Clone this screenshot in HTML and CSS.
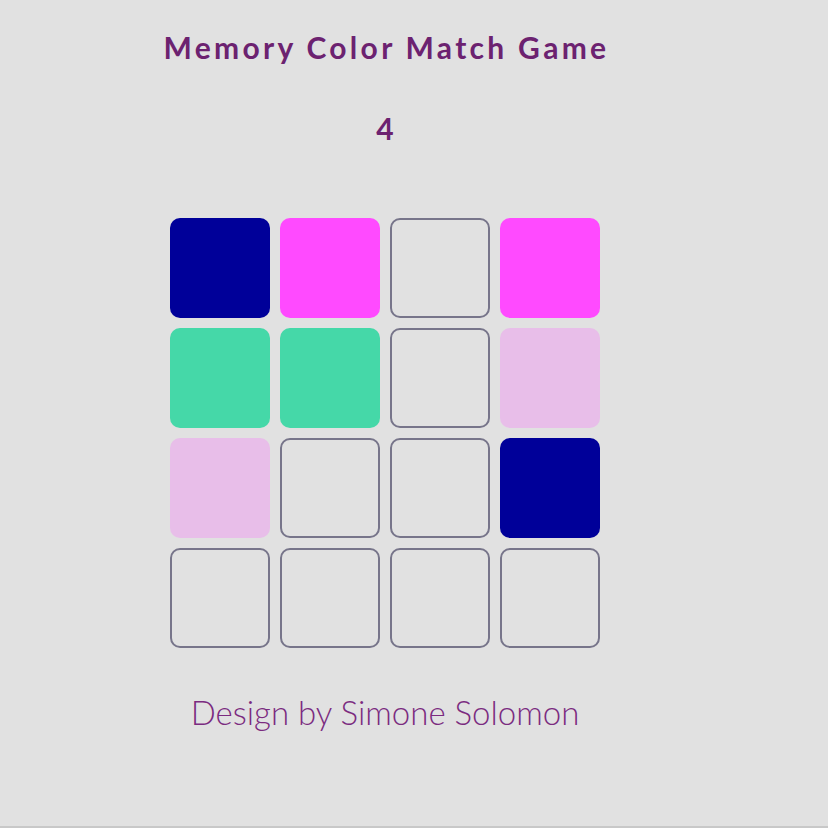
FILE: index.html
```html
<!DOCTYPE html>
<html>
<head>
<meta charset="utf-8">
<link rel="stylesheet" href="styles.css">
</head>
<body>
<main class="game">
  <h1 class="title">Memory Color Match Game</h1>
  <div class="score">4</div>
  <div class="board">
    <div class="tile blue"></div>
    <div class="tile magenta"></div>
    <div class="tile hidden"></div>
    <div class="tile magenta"></div>
    <div class="tile green"></div>
    <div class="tile green"></div>
    <div class="tile hidden"></div>
    <div class="tile pink"></div>
    <div class="tile pink"></div>
    <div class="tile hidden"></div>
    <div class="tile hidden"></div>
    <div class="tile blue"></div>
    <div class="tile hidden"></div>
    <div class="tile hidden"></div>
    <div class="tile hidden"></div>
    <div class="tile hidden"></div>
  </div>
  <p class="credit">Design by Simone Solomon</p>
</main>
</body>
</html>
```
FILE: styles.css
```css
html, body {
  margin: 0;
  padding: 0;
  background: #e1e1e1;
  height: 100%;
}
body {
  border-bottom: 2px solid #c8c8c8;
  box-sizing: border-box;
}
.game {
  width: 770px;
  display: flex;
  flex-direction: column;
  align-items: center;
  font-family: "Lato", "Open Sans", sans-serif;
}
.title {
  margin: 29px 0 0;
  padding-left: 3px;
  font-size: 30px;
  line-height: 36px;
  font-weight: 700;
  color: #6c2270;
  letter-spacing: 3.3px;
}
.score {
  margin-top: 45px;
  font-size: 30px;
  line-height: 36px;
  font-weight: 700;
  color: #6c2270;
}
.board {
  margin-top: 72px;
  display: grid;
  grid-template-columns: repeat(4, 100px);
  grid-auto-rows: 100px;
  gap: 10px;
}
.tile {
  border-radius: 10px;
  box-sizing: border-box;
}
.blue { background: #000099; }
.magenta { background: #ff4aff; }
.green { background: #45d8a8; }
.pink { background: #e8bee9; }
.hidden { border: 2px solid #77758a; }
.credit {
  margin: 44px 0 0;
  font-size: 33px;
  line-height: 40px;
  font-weight: 300;
  color: #7b2b80;
}
```
